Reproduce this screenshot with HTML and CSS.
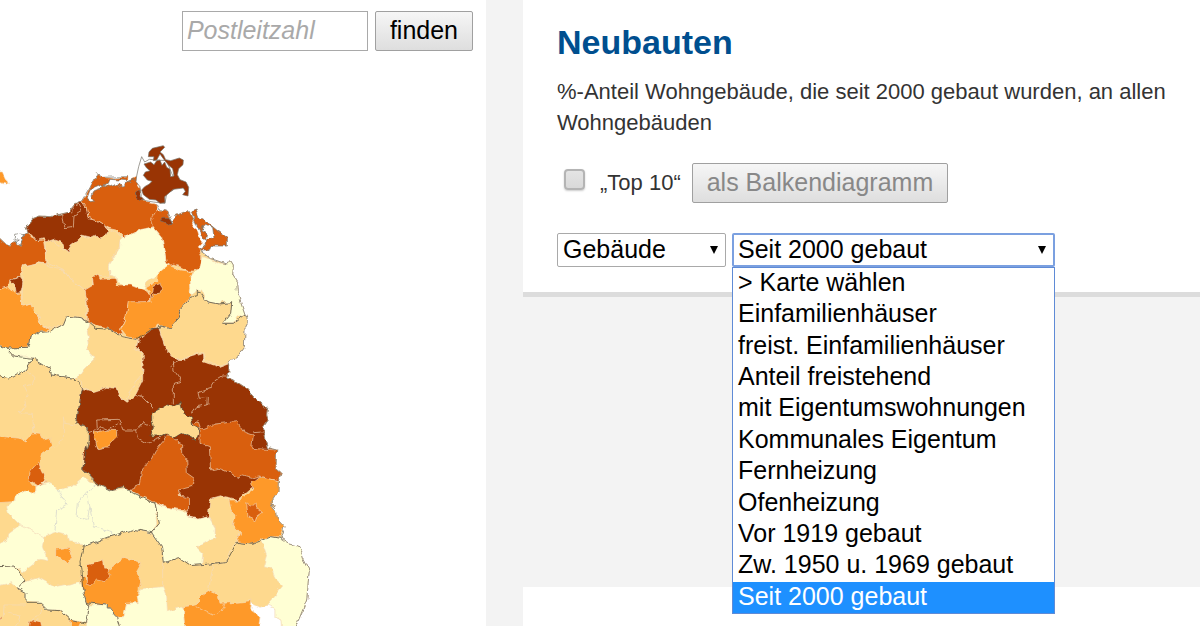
FILE: index.html
```html
<!DOCTYPE html>
<html lang="de">
<head>
  <meta charset="UTF-8">
  <meta name="viewport" content="width=device-width, initial-scale=1.0">
  <title>Neubauten</title>
  <link rel="stylesheet" href="styles.css">
</head>
<body>
  <main class="page">
    <section class="map-panel">
      <form class="search">
        <input type="text" id="plz" name="plz" placeholder="Postleitzahl" aria-label="Postleitzahl">
        <button type="submit">finden</button>
      </form>

      <!-- one map unit is a third of a pixel -->
      <svg class="map" viewBox="0 0 960 1458" role="img" aria-label="Karte der Landkreise">
        <defs>
          <filter id="rough" x="0" y="0" width="100%" height="100%" color-interpolation-filters="sRGB">
            <feTurbulence type="fractalNoise" baseFrequency="0.05" numOctaves="2" seed="4" result="noise"/>
            <feDisplacementMap in="SourceGraphic" in2="noise" scale="16" xChannelSelector="R" yChannelSelector="G"/>
          </filter>
        </defs>
        <g class="land" filter="url(#rough)">
          <!-- outline of the whole area -->
          <path class="c2" d="M-9 287L15 310 30 315 45 308 62 318 70 285 85 278 78 262 100 235 120 228 150 230 205 217 225 192 245 183 262 195 300 180 410 180 470 192 474 225 500 300 598 330 630 355 668 368 685 372 692 362 700 375 698 405 710 425 712 455 735 522 745 545 735 565 733 620 715 645 685 665 687 695 682 715 705 722 735 742 765 775 803 805 800 825 805 840 787 865 795 900 802 923 830 930 828 985 844 998 835 1022 834 1055 812 1090 830 1115 832 1135 855 1160 850 1182 843 1195 870 1212 900 1220 910 1255 928 1290 920 1380 900 1430 882 1470 845 1470 843 1440 825 1430 825 1405 805 1395 780 1402 755 1390 752 1410 780 1430 772 1470 -9 1470Z"/>
          <path class="c3" d="M-9 92L8 98 25 134 -9 126Z"/>

          <!-- Mecklenburg-Vorpommern -->
          <path class="c4" d="M-9 287L15 310 30 315 45 308 62 318 70 285 85 278 108 302 130 300 135 330 138 362 135 372 115 368 70 377 62 410 30 420 25 440 -9 450Z"/>
          <path class="water coast" d="M42 300L44 286 62 282 72 284 62 316 46 308 58 300Z"/>
          <path class="c3" d="M-9 450L25 440 45 460 62 458 65 498 85 495 98 492 105 515 125 555 148 570 118 577 92 590 85 620 50 625 20 624 -9 615Z"/>
          <path class="c5" d="M28 420L60 412 70 425 62 458 45 460 42 435Z"/>
          <path class="c2" d="M70 378L115 370 137 372 160 385 190 390 205 410 230 430 255 450 262 480 258 510 262 540 240 532 205 528 190 552 150 565 125 555 105 515 95 492 65 498 68 440Z"/>
          <path class="c2" d="M135 300L165 300 180 325 203 335 215 312 240 290 270 295 300 290 325 265 352 278 362 290 358 320 330 372 328 410 290 405 278 415 278 445 255 450 205 410 190 388 138 365Z"/>
          <path class="c5" d="M85 278L78 262 100 235 120 228 150 230 205 217 225 192 245 183 260 203 264 235 290 242 312 256 327 270 318 285 300 297 288 285 270 294 246 288 234 300 213 315 203 336 190 325 183 303 165 297 138 306 130 296 108 302 96 286Z"/>
          <path class="line" d="M188 222L195 266 220 262 222 225 246 210 238 192 218 202 215 220"/>
          <path class="c4" d="M245 183L258 165 270 140 292 98 300 112 340 115 384 110 384 122 410 108 414 132 426 150 420 168 432 183 470 190 474 210 456 237 465 258 441 267 420 270 396 285 372 291 351 270 327 265 312 256 290 242 264 235 260 203Z"/>
          <path class="water coast" d="M262 172L270 150 300 137 325 130 330 118 384 122 402 116 375 128 368 145 355 132 330 140 310 135 300 148 280 155 275 172 282 186 268 188Z"/>
          <path class="c5 coast" d="M402 165L418 148 424 170 436 182 420 182Z"/>
          <path class="c4" d="M455 235L470 210 480 210 500 213 510 235 518 250 525 228 545 218 563 212 572 225 582 242 578 262 592 272 597 290 608 306 595 320 598 332 605 350 605 380 580 390 560 390 540 380 520 375 500 385 495 340 480 285 460 260Z"/>
          <path class="c4 coast" d="M573 212L588 207 597 232 620 245 650 270 682 293 682 318 640 318 620 330 597 330 612 318 620 300 642 292 638 262 615 252 610 268 592 262Z"/>
          <path class="c4 coast" d="M600 264L612 256 608 274 622 282 620 298 606 290Z"/>
          <path class="c5 coast" d="M480 245L490 235 510 235 518 250 500 253Z"/>
          <path class="c1" d="M362 285L375 292 425 268 460 262 485 290 492 330 498 365 510 385 470 405 440 425 432 450 400 440 375 435 350 425 348 410 330 405 328 378 358 330Z"/>
          <path class="c4" d="M255 450L280 435 278 415 295 405 300 418 345 415 350 435 390 435 440 455 455 465 450 485 385 490 380 525 362 565 370 585 330 570 290 565 262 540 262 490Z"/>
          <path class="c3" d="M505 375L540 390 580 395 570 410 575 435 570 470 540 510 535 535 510 565 475 555 465 575 415 598 380 588 362 565 378 530 385 485 450 485 455 465 435 445 470 425 472 402Z"/>
          <path class="c5" d="M458 440L478 430 490 448 478 460 462 460 452 486Z"/>
          <path class="c1" d="M610 350L660 370 685 372 692 362 700 375 698 405 710 425 712 455 735 522 712 530 700 548 668 548 690 520 695 490 665 485 650 492 620 485 605 450 590 445 592 470 570 465 572 440 570 410 600 380Z"/>

          <!-- Brandenburg und Berlin -->
          <path class="c2" d="M592 445L605 465 620 485 655 492 695 488 692 520 668 550 700 550 735 522 745 545 735 565 733 620 715 645 685 665 655 678 640 670 612 660 615 635 580 645 540 660 500 640 485 590 475 560 510 565 535 535 540 510 570 475Z"/>
          <path class="c1" d="M20 625L85 622 90 588 118 577 150 575 190 553 200 528 240 533 270 548 262 575 268 610 260 630 285 655 255 685 245 705 220 715 155 705 150 685 100 655 40 648Z"/>
          <path class="c1" d="M-9 612L20 625 40 648 75 645 100 655 75 690 30 717 -9 705Z"/>
          <path class="c2" d="M270 548L330 568 370 590 415 600 405 625 425 635 425 680 430 700 405 730 380 785 360 770 345 745 320 740 310 760 280 755 245 740 235 710 255 685 285 655 260 630 268 610 262 575Z"/>
          <path class="c5" d="M415 600L455 568 475 565 485 590 500 635 540 662 575 650 610 640 612 665 655 680 687 668 687 695 682 715 705 722 735 742 765 775 803 805 800 825 805 840 787 865 795 900 802 923 830 930 800 1010 750 1050 715 1080 680 1070 632 1080 625 1130 600 1138 565 1130 540 1060 395 1058 370 1040 330 1050 290 1030 248 985 250 940 265 910 265 865 230 850 235 810 240 780 245 745 280 755 320 742 345 745 360 770 380 785 405 765 428 720 430 640 410 620Z"/>
          <path class="line" d="M520 790L520 730 545 725 522 690 520 665M575 820L590 800 620 795 622 772 598 775 594 758 630 745 645 722 672 705 682 705"/>
          <path class="line" d="M512 680L540 662M405 765L430 775 460 805M265 878L292 868 290 840 358 838 370 870 410 870 415 895 440 910 480 895 485 888M410 870L430 848 452 860M295 880L300 860 325 870 355 850"/>
          <path class="c3" d="M280 876L325 870 350 872 350 890 335 905 325 920 292 927Z"/>
          <path class="c4" d="M505 885L525 898 545 915 545 940 560 955 562 1000 583 1015 575 1040 535 1050 540 1068 565 1072 566 1110 535 1108 490 1100 465 1088 440 1075 400 1060 385 1050 418 1035 425 990 450 965 465 935 480 915Z"/>
          <path class="c4" d="M600 870L645 852 710 845 730 875 760 885 755 925 802 928 830 930 828 985 844 998 835 1022 800 1015 778 1008 755 1015 730 1008 715 1015 685 995 660 985 632 990 628 920 600 910Z"/>
          <path class="c4" d="M580 852L595 845 602 866 588 866Z"/>
          <path class="line" d="M760 878L788 876"/>
          <path class="c2 state" d="M455 820L485 805 495 793 515 798 540 788 545 815 575 835 578 855 600 870 588 903 570 890 545 880 520 895 495 880 480 888 452 888 460 860 455 840Z"/>
          <path class="c2" d="M632 1078L660 1070 692 1080 705 1130 700 1155 722 1178 710 1205 690 1230 680 1265 630 1272 605 1275 608 1240 590 1222 645 1190 645 1160 625 1130 628 1090Z"/>
          <path class="c3" d="M720 1080L760 1050 755 1030 778 1010 835 1022 834 1055 812 1090 830 1115 832 1135 855 1160 843 1190 815 1190 785 1198 755 1213 712 1205 722 1178 700 1155 705 1130 695 1110 690 1080Z"/>
          <path class="c4" d="M740 1088L754 1098 768 1085 770 1105 785 1118 770 1128 765 1142 744 1132Z"/>
          <path class="c1" d="M465 1090L490 1100 560 1115 565 1130 595 1138 625 1130 645 1165 645 1190 590 1222 608 1240 605 1275 570 1275 535 1253 490 1270 485 1220 455 1180 478 1150Z"/>

          <!-- Sachsen-Anhalt -->
          <path class="line" d="M75 690L105 715 100 730 70 735 85 765 75 780 78 800 55 818 97 820 102 880M190 830L192 850 230 855M190 850L190 890 172 918 150 925"/>
          <path class="c3" d="M-9 888L60 895 75 903 98 878 120 880 130 900 150 895 155 920 128 940 120 970 90 1000 95 1030 105 1040 102 1062 75 1052 45 1070 42 1085 -9 1088Z"/>
          <path class="c4" d="M90 995L115 965 122 985 140 1025 115 1038 88 1020Z"/>
          <path class="c1" d="M45 1065L75 1050 105 1060 105 1040 150 1025 175 1050 215 1040 250 1010 290 1035 335 1050 380 1045 440 1080 465 1090 470 1150 455 1180 400 1168 330 1190 250 1220 240 1208 208 1205 205 1185 170 1175 130 1190 60 1155 25 1120 20 1100 45 1080Z"/>
          <path class="c1" d="M-9 1215L20 1200 25 1180 60 1155 135 1192 130 1220 145 1262 120 1258 70 1295 45 1280 -9 1280Z"/>
          <path class="grey" d="M175 1050L200 1095 170 1110 165 1170M260 1055L232 1090 228 1130 260 1138 270 1105 262 1055 290 1035M270 1105L280 1160 335 1175 335 1188"/>
          <path class="c3" d="M170 1230L205 1225 218 1245 203 1275 188 1255 170 1248Z"/>
          <path class="c1" d="M75 1325L115 1313 165 1340 240 1325 260 1390 270 1395 262 1450 215 1440 180 1410 145 1410 125 1390 78 1385 78 1360 52 1345Z"/>
          <path class="c1" d="M-9 1280L45 1280 75 1320 55 1345 35 1328 -9 1338Z"/>
          <path class="line" d="M10 1430L12 1395 75 1395M130 1395L120 1425 95 1440M25 1420L60 1428 50 1458"/>
          <path class="c4" d="M88 1445L100 1440 122 1445 127 1470 85 1470ZM-9 1430L5 1435 -9 1442Z"/>
          <path class="c3" d="M210 1442L245 1445 232 1470 215 1470Z"/>

          <!-- Sachsen -->
          <path class="c3" d="M240 1305L262 1320 330 1285 375 1253 425 1268 410 1295 422 1325 412 1370 415 1388 380 1390 372 1430 350 1432 318 1395 260 1388 250 1360Z"/>
          <path class="c4" d="M262 1275L310 1262 315 1285 330 1305 315 1325 290 1320 270 1338 262 1332Z"/>
          <path class="c1" d="M270 1395L318 1395 350 1432 362 1470 255 1470 262 1450Z"/>
          <path class="c1" d="M425 1345L450 1345 488 1340 500 1370 502 1415 550 1400 555 1470 362 1470 350 1432 372 1430 380 1390 415 1388 412 1370Z"/>
          <path class="line" d="M488 1340L488 1270M640 1272L625 1352"/>
          <path class="c3" d="M550 1400L590 1395 605 1365 625 1352 655 1365 660 1390 700 1388 755 1382 752 1410 780 1430 775 1470 555 1470Z"/>
          <path class="line" d="M590 1400L640 1425 670 1405 675 1390"/>
          <path class="c1" d="M785 1200L815 1190 843 1195 870 1212 900 1220 910 1255 928 1290 920 1380 900 1430 882 1470 845 1470 843 1440 825 1430 825 1405 800 1395 830 1360 848 1338 825 1315 815 1285 790 1280 800 1245Z"/>

          <!-- borders between the states -->
          <path class="state" d="M-9 615L20 624 85 622 90 588 118 577 150 575 190 553 200 528 240 533 270 548 290 565 330 568 365 590 410 598 455 568 475 570 480 558 510 565 535 535 540 510 570 475 592 470 592 445 605 465 620 485 655 492 695 488 692 520 668 550 700 550 735 522"/>
          <path class="state" d="M20 625L40 648 100 655 150 685 155 705 220 715 248 745 240 780 230 850 265 865 265 900 248 985 290 1030 330 1050 370 1040 400 1060 465 1090 478 1150 455 1178 400 1168 330 1190 250 1220 240 1265 250 1360 260 1390 270 1395 258 1452"/>
          <path class="state" d="M100 655L75 690 30 717 -9 708M455 1178L485 1220 490 1270 535 1253 570 1277 630 1272 680 1265 710 1207 755 1213 815 1190 843 1195"/>
          <path class="state" d="M-9 1280L45 1278 75 1320 52 1345 78 1360 78 1390 125 1390 145 1410 180 1412 215 1442 258 1452M260 1388L318 1395 350 1432 360 1470"/>
          <path class="edge" d="M-9 287L15 310 30 315 45 308 62 318 70 285 85 278 78 262 100 235 120 228 150 230 205 217 225 192 245 183 270 140 292 98 300 112 383 110M470 190L480 210 500 213 518 250 525 228 563 212 580 240M598 330L630 355 668 368 685 372 692 362 700 375 698 405 710 425 712 455 735 522 745 545 735 565 733 620 715 645 685 665 687 695 682 715 705 722 735 742 765 775 803 805 800 825 805 840 787 865 795 900 802 923 830 930 828 985 844 998 835 1022 834 1055 812 1090 830 1115 832 1135 855 1160 850 1182 843 1195 870 1212 900 1220 910 1255 928 1290 920 1380 900 1430 882 1470"/>
        </g>

        <!-- Rügen -->
        <g class="island">
          <path class="water coast" d="M410 108L416 80 425 50 434 66 448 58 470 60 500 62 515 100 530 130 520 150 500 160 495 190 460 186 436 182 424 170 420 140 408 125Z"/>
          <path class="c5 coast" d="M445 50L447 36 457 25 490 17 494 22 480 36 490 44 497 59 512 62 538 54 550 60 549 74 536 86 532 104 540 119 558 126 566 142 564 168 548 164 556 154 550 144 520 148 508 158 494 170 495 188 480 190 468 180 448 178 430 164 425 150 434 140 448 132 456 124 442 120 430 106 436 96 450 92 440 84 432 72 452 66 462 74 470 62 480 60 486 76 494 66 500 82 510 88 512 110 522 108 518 86 506 76 490 56 480 42 470 60 460 62 462 50Z"/>
        </g>
      </svg>
    </section>

    <section class="side">
      <div class="panel">
        <h1>Neubauten</h1>
        <p>%-Anteil Wohngebäude, die seit 2000 gebaut wurden, an allen Wohngebäuden</p>

        <div class="top-ten">
          <input type="checkbox" id="top10">
          <label for="top10">„Top 10“</label>
          <button type="button" disabled>als Balkendiagramm</button>
        </div>

        <div class="selects">
          <select class="group" aria-label="Gruppe">
            <option>Gebäude</option>
          </select>
          <div class="dropdown">
            <select class="topic" aria-label="Karte">
              <option>Seit 2000 gebaut</option>
            </select>
            <ul class="options" role="listbox" aria-label="Karten">
              <li role="option">&gt; Karte wählen</li>
              <li role="option">Einfamilienhäuser</li>
              <li role="option">freist. Einfamilienhäuser</li>
              <li role="option">Anteil freistehend</li>
              <li role="option">mit Eigentumswohnungen</li>
              <li role="option">Kommunales Eigentum</li>
              <li role="option">Fernheizung</li>
              <li role="option">Ofenheizung</li>
              <li role="option">Vor 1919 gebaut</li>
              <li role="option">Zw. 1950 u. 1969 gebaut</li>
              <li role="option" class="selected" aria-selected="true">Seit 2000 gebaut</li>
            </ul>
          </div>
        </div>
      </div>
      <div class="panel next"></div>
    </section>
  </main>
</body>
</html>
```
FILE: styles.css
```css
* {
  box-sizing: border-box;
}

body {
  margin: 0;
  background-color: #f3f3f3;
  color: #333;
  font-family: "Liberation Sans", Arial, sans-serif;
}

/* Page columns */
.page {
  display: grid;
  grid-template-columns: 486px 1fr;
  column-gap: 37px;
  min-height: 100vh;
}

/* Map column */
.map-panel {
  background-color: #fff;
}

.search {
  display: flex;
  justify-content: flex-end;
  gap: 7px;
  height: 140px;
  padding: 11px 13px 0 0;
}

.search input {
  width: 186px;
  height: 40px;
  padding: 0 4px 2px;
  border: 1px solid #a9a9a9;
  font: 25px "Liberation Sans", Arial, sans-serif;
}

.search input::placeholder {
  color: #a9a9a9;
  font-style: italic;
}

button {
  height: 40px;
  padding: 0 14px 2px;
  border: 1px solid #a0a0a0;
  border-radius: 2px;
  background: linear-gradient(#f6f6f6, #dedede);
  color: #000;
  font: 25px "Liberation Sans", Arial, sans-serif;
}

button:disabled {
  color: #888;
}

.map {
  display: block;
  width: 320px;
  height: 486px;
}

.land path,
.island path {
  stroke: #f3dcc0;
  stroke-opacity: 0.6;
  stroke-width: 3;
  stroke-linejoin: round;
}

/* Share of new buildings, low to high */
.c1 { fill: #ffffd4; }
.c2 { fill: #fed98e; }
.c3 { fill: #fe9929; }
.c4 { fill: #d95f0e; }
.c5 { fill: #993404; }
.water { fill: #fff; }

.line,
.grey,
.edge {
  fill: none;
}

.land .grey {
  stroke: #ccc;
}

path.state:not(.c2) {
  fill: none;
}

.land .state {
  stroke: #555040;
  stroke-opacity: 0.8;
  stroke-width: 3;
}

.land .edge,
.land .coast,
.island .coast {
  stroke: #77736a;
  stroke-opacity: 0.7;
  stroke-width: 3;
}

/* Right column */
.side {
  display: flex;
  flex-direction: column;
  gap: 290px;
}

.panel {
  height: 297px;
  padding: 22px 20px 0 34px;
  border-bottom: 5px solid #dcdcdc;
  background-color: #fff;
}

.panel.next {
  flex: 1;
  height: auto;
  padding: 0;
  border: 0;
}

h1 {
  margin: 0;
  color: #004f8f;
  font-size: 34px;
  line-height: 40px;
}

p {
  margin: 14px 0 25px;
  font-size: 22px;
  line-height: 31px;
}

.top-ten {
  display: flex;
  align-items: center;
  margin-bottom: 30px;
}

.top-ten input {
  appearance: none;
  width: 21px;
  height: 21px;
  margin: 0 15px 8px 7px;
  border: 2px solid #b4b4b4;
  border-radius: 4px;
  background: linear-gradient(#e4e4e4, #d9d9d9);
  box-shadow: 0 1px 2px #ccc;
}

.top-ten label {
  margin-right: 11px;
  font-size: 22px;
}

.selects {
  display: flex;
  gap: 6px;
}

select {
  appearance: none;
  height: 34px;
  padding: 0 5px 2px;
  border: 1px solid #a9a9a9;
  border-radius: 2px;
  background: #fff;
  color: #000;
  font: 25px "Liberation Sans", Arial, sans-serif;
}

.dropdown {
  position: relative;
}

.selects .group {
  width: 169px;
}

.selects select {
  background-image: url("data:image/svg+xml,%3Csvg xmlns='http://www.w3.org/2000/svg' width='8' height='8'%3E%3Cpath d='M0 0h8L4 8z'/%3E%3C/svg%3E");
  background-repeat: no-repeat;
  background-position: right 7px center;
}

.dropdown .topic {
  display: block;
  width: 323px;
  padding-left: 4px;
  border: 2px solid #7ba0e0;
}

/* Open list */
.options {
  position: absolute;
  top: 34px;
  left: 0;
  display: flex;
  flex-direction: column;
  width: 323px;
  height: 347px;
  margin: 0;
  padding: 0;
  border: 1px solid #5f8bd6;
  background-color: #fff;
  color: #000;
  font-size: 25px;
  line-height: 28px;
  list-style: none;
}

.options li {
  flex: 1;
  padding-left: 5px;
}

.options .selected {
  background-color: #1e90ff;
  color: #fff;
}
```
